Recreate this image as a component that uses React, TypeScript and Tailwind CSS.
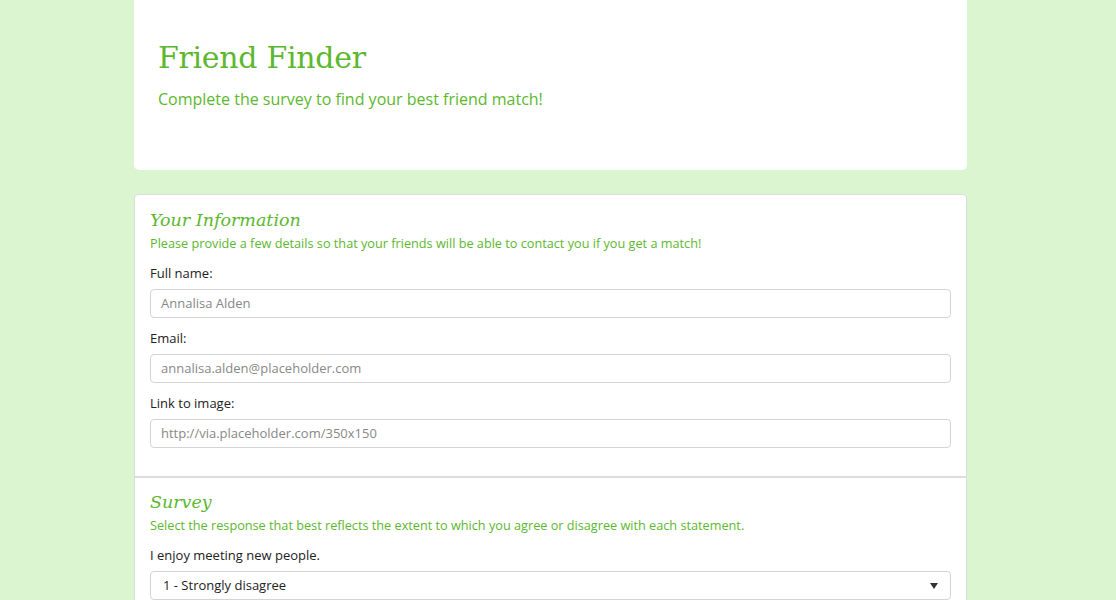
import React from "react";

const green = "text-[#5cb82e]";

function Field({ label, placeholder }: { label: string; placeholder: string }) {
  return (
    <div className="mb-[11px]">
      <div className="h-[18px] leading-[18px] text-[13px] text-[#222] mb-[7px]">{label}</div>
      <div className="h-[29px] border border-[#d4d4d4] rounded-[4px] px-[10px] flex items-center text-[13px] text-[#888]">
        {placeholder}
      </div>
    </div>
  );
}

export default function App() {
  return (
    <div className="min-h-[600px] bg-[#dbf5d0] font-['Open_Sans',sans-serif] pr-[15px]">
      <div className="w-[833px] mx-auto">
        <div className="bg-white rounded-b-[5px] h-[170px] pl-[24px] pt-[36px]">
          <h1 className={`font-['DejaVu_Serif',serif] text-[30px] leading-[44px] ${green} tracking-[-0.3px]`}>Friend Finder</h1>
          <p className={`mt-[8px] text-[16px] leading-[22px] ${green}`}>Complete the survey to find your best friend match!</p>
        </div>
        <div className="mt-[24px] bg-white border border-[#ddd] rounded-t-[4px]">
          <div className="px-[15px] pt-[13px] pb-[17px]">
            <h2 className={`font-['DejaVu_Serif',serif] italic text-[17.5px] leading-[24px] ${green}`}>Your Information</h2>
            <p className={`mt-[3px] text-[12.7px] leading-[16px] ${green} mb-[13px]`}>
              Please provide a few details so that your friends will be able to contact you if you get a match!
            </p>
            <Field label="Full name:" placeholder="Annalisa Alden" />
            <Field label="Email:" placeholder="annalisa.alden@placeholder.com" />
            <Field label="Link to image:" placeholder="http://via.placeholder.com/350x150" />
          </div>
          <div className="border-t-2 border-[#ddd] px-[15px] pt-[12px] pb-[16px]">
            <h2 className={`font-['DejaVu_Serif',serif] italic text-[17.5px] leading-[24px] ${green}`}>Survey</h2>
            <p className={`mt-[3px] text-[12.7px] leading-[16px] ${green} mb-[13px]`}>
              Select the response that best reflects the extent to which you agree or disagree with each statement.
            </p>
            <div className="h-[18px] leading-[18px] text-[13px] text-[#222] mb-[7px]">I enjoy meeting new people.</div>
            <div className="h-[29px] border border-[#d4d4d4] rounded-[4px] px-[12px] flex items-center justify-between text-[13px] text-[#222]">
              <span>1 - Strongly disagree</span>
              <svg width="8" height="6" viewBox="0 0 8 6"><path d="M0 0h8L4 6z" fill="#333" /></svg>
            </div>
            <div className="h-[40px]" />
          </div>
        </div>
      </div>
    </div>
  );
}
